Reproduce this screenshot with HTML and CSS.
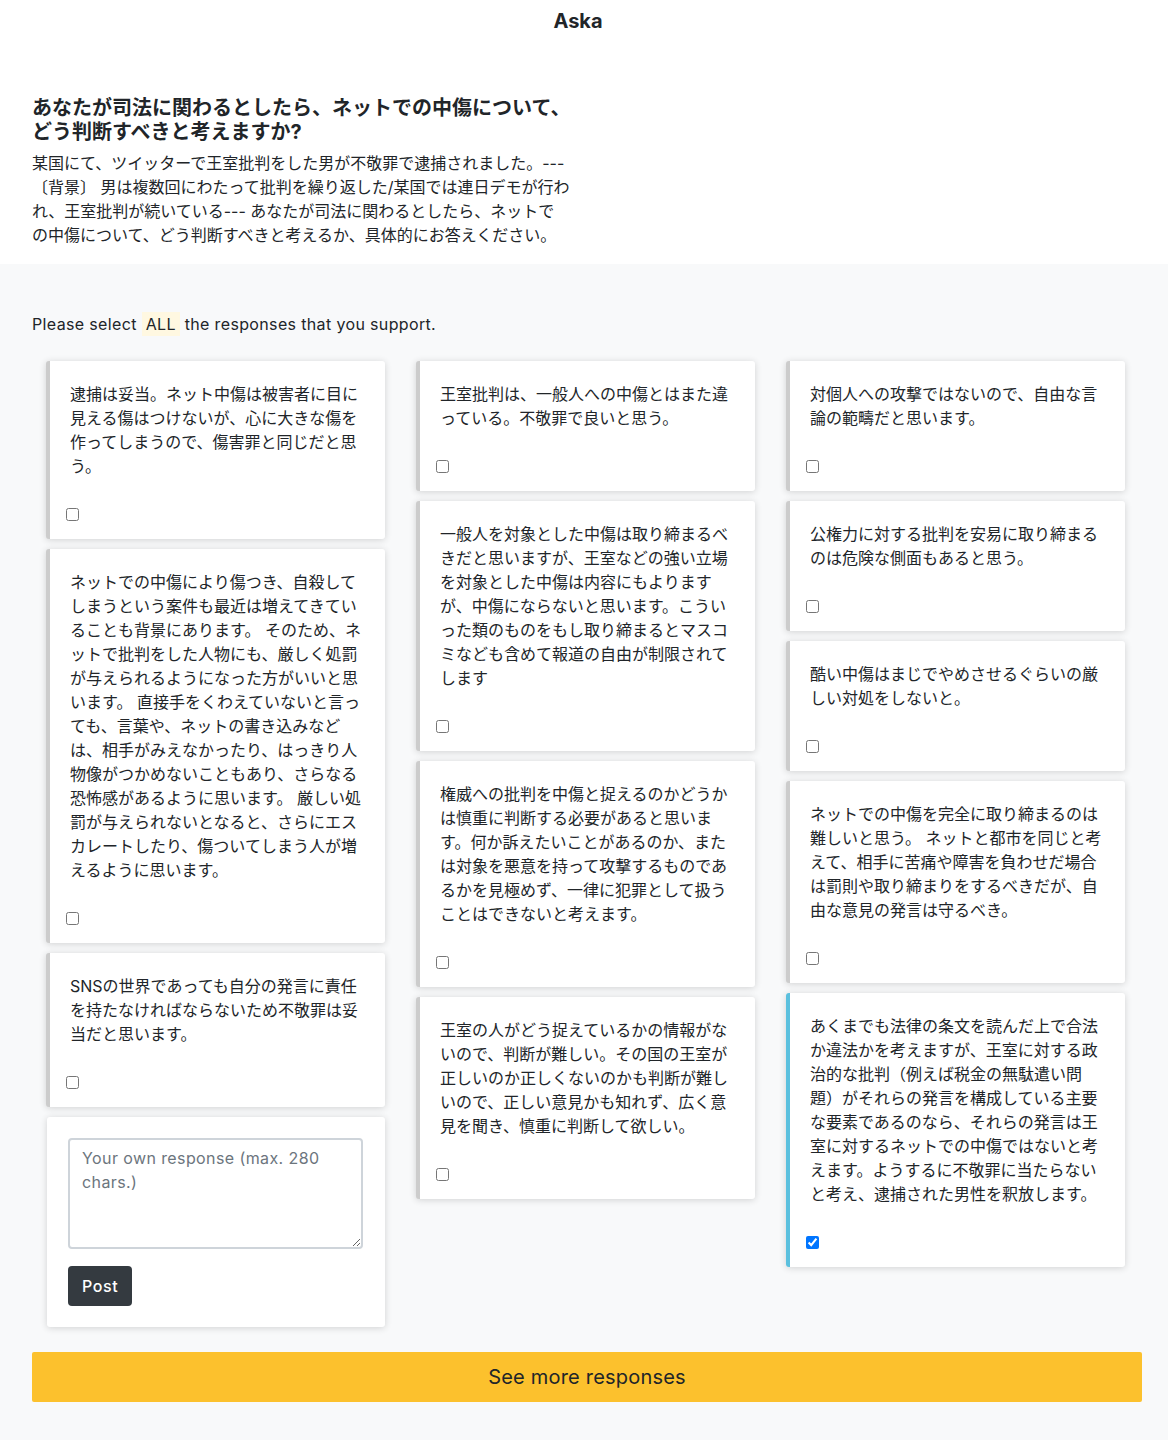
FILE: index.html
```html
<!DOCTYPE html>
<html lang="ja">
<head>
<meta charset="utf-8">
<title>Aska</title>
<link rel="stylesheet" href="styles.css">
</head>
<body>
<header class="topbar">Aska</header>
<section class="question">
  <h1 class="q-title">あなたが司法に関わるとしたら、ネットでの中傷について、どう判断すべきと考えますか?</h1>
  <p class="q-desc">某国にて、ツイッターで王室批判をした男が不敬罪で逮捕されました。--- 〔背景〕 男は複数回にわたって批判を繰り返した/某国では連日デモが行われ、王室批判が続いている--- あなたが司法に関わるとしたら、ネットでの中傷について、どう判断すべきと考えるか、具体的にお答えください。</p>
</section>
<main class="responses">
  <p class="instruction">Please select <span class="hl">ALL</span> the responses that you support.</p>
  <div class="board">
    <div class="col">
      <div class="card"><p class="card-text">逮捕は妥当。ネット中傷は被害者に目に見える傷はつけないが、心に大きな傷を作ってしまうので、傷害罪と同じだと思う。</p><input type="checkbox" class="check"></div>
      <div class="card"><p class="card-text">ネットでの中傷により傷つき、自殺してしまうという案件も最近は増えてきていることも背景にあります。 そのため、ネットで批判をした人物にも、厳しく処罰が与えられるようになった方がいいと思います。 直接手をくわえていないと言っても、言葉や、ネットの書き込みなどは、相手がみえなかったり、はっきり人物像がつかめないこともあり、さらなる恐怖感があるように思います。 厳しい処罰が与えられないとなると、さらにエスカレートしたり、傷ついてしまう人が増えるように思います。</p><input type="checkbox" class="check"></div>
      <div class="card"><p class="card-text">SNSの世界であっても自分の発言に責任を持たなければならないため不敬罪は妥当だと思います。</p><input type="checkbox" class="check"></div>
      <div class="card card-own">
        <textarea class="own-input" placeholder="Your own response (max. 280 chars.)"></textarea>
        <button class="post-btn" type="button">Post</button>
      </div>
    </div>
    <div class="col">
      <div class="card"><p class="card-text">王室批判は、一般人への中傷とはまた違っている。不敬罪で良いと思う。</p><input type="checkbox" class="check"></div>
      <div class="card"><p class="card-text">一般人を対象とした中傷は取り締まるべきだと思いますが、王室などの強い立場を対象とした中傷は内容にもよりますが、中傷にならないと思います。こういった類のものをもし取り締まるとマスコミなども含めて報道の自由が制限されてします</p><input type="checkbox" class="check"></div>
      <div class="card"><p class="card-text">権威への批判を中傷と捉えるのかどうかは慎重に判断する必要があると思います。何か訴えたいことがあるのか、または対象を悪意を持って攻撃するものであるかを見極めず、一律に犯罪として扱うことはできないと考えます。</p><input type="checkbox" class="check"></div>
      <div class="card"><p class="card-text">王室の人がどう捉えているかの情報がないので、判断が難しい。その国の王室が正しいのか正しくないのかも判断が難しいので、正しい意見かも知れず、広く意見を聞き、慎重に判断して欲しい。</p><input type="checkbox" class="check"></div>
    </div>
    <div class="col">
      <div class="card"><p class="card-text">対個人への攻撃ではないので、自由な言論の範疇だと思います。</p><input type="checkbox" class="check"></div>
      <div class="card"><p class="card-text">公権力に対する批判を安易に取り締まるのは危険な側面もあると思う。</p><input type="checkbox" class="check"></div>
      <div class="card"><p class="card-text">酷い中傷はまじでやめさせるぐらいの厳しい対処をしないと。</p><input type="checkbox" class="check"></div>
      <div class="card"><p class="card-text">ネットでの中傷を完全に取り締まるのは難しいと思う。 ネットと都市を同じと考えて、相手に苦痛や障害を負わせだ場合は罰則や取り締まりをするべきだが、自由な意見の発言は守るべき。</p><input type="checkbox" class="check"></div>
      <div class="card card-selected"><p class="card-text">あくまでも法律の条文を読んだ上で合法か違法かを考えますが、王室に対する政治的な批判（例えば税金の無駄遣い問題）がそれらの発言を構成している主要な要素であるのなら、それらの発言は王室に対するネットでの中傷ではないと考えます。ようするに不敬罪に当たらないと考え、逮捕された男性を釈放します。</p><input type="checkbox" class="check" checked></div>
    </div>
  </div>
  <button class="more-btn" type="button">See more responses</button>
</main>
</body>
</html>
```

FILE: styles.css
```css
html, body {
  margin: 0;
  padding: 0;
}
body {
  background: #f8f9fa;
  color: #212529;
  font-family: "Inter", "Noto Sans CJK JP", sans-serif;
  font-size: 16px;
  line-height: 24px;
}
.topbar {
  background: #fff;
  text-align: center;
  font-weight: 700;
  font-size: 20px;
  line-height: 24px;
  padding: 9px 12px 0 0;
  height: 24px;
}
.question {
  background: #fff;
  padding: 63px 26px 17px 32px;
}
.q-title {
  margin: 0;
  width: 545px;
  font-size: 20px;
  line-height: 24px;
  font-weight: 700;
}
.q-desc {
  margin: 7px 0 0;
  width: 538px;
}
.responses {
  padding: 48px 26px 38px 32px;
}
.instruction {
  margin: 0;
  letter-spacing: 0.022em;
}
.hl {
  background: #fff8e1;
  padding: 2px 4px;
}
.board {
  display: grid;
  grid-template-columns: repeat(3, 339px);
  column-gap: 31px;
  padding-left: 14px;
  margin-top: 25px;
  align-items: start;
}
.col {
  display: flex;
  flex-direction: column;
  gap: 10px;
}
.card {
  background: #fff;
  border-left: 4px solid #cccccc;
  border-radius: 3px;
  box-shadow: 0 1px 7px rgba(0, 0, 0, 0.16);
  padding: 21px 20px 15px 20px;
}
.card-selected {
  border-left-color: #5bc0de;
}
.card-text {
  margin: 0 0 30px;
}
.check {
  display: block;
  width: 13px;
  height: 13px;
  margin: 3px 0 3px -4px;
}
.card-own {
  border-left: 0;
  margin-left: 1px;
  padding: 21px;
}
.own-input {
  display: block;
  box-sizing: border-box;
  width: 295px;
  height: 111px;
  border: 2px solid #ced4da;
  border-radius: 4px;
  padding: 6px 12px;
  font-family: "Inter", "Noto Sans CJK JP", sans-serif;
  font-size: 16px;
  line-height: 24px;
  letter-spacing: 0.025em;
  color: #212529;
  margin: 0;
}
.own-input::placeholder {
  color: #6c757d;
}
.post-btn {
  display: block;
  margin-top: 17px;
  height: 40px;
  padding: 0 14px;
  background: #343a40;
  color: #fff;
  border: 0;
  border-radius: 4px;
  font-family: "Inter", sans-serif;
  font-size: 16px;
  font-weight: 500;
  letter-spacing: 0.04em;
}
.more-btn {
  display: block;
  width: 1110px;
  height: 50px;
  margin-top: 25px;
  background: #fcc12d;
  border: 0;
  border-radius: 2px;
  color: #212529;
  font-family: "Inter", sans-serif;
  font-size: 20px;
  letter-spacing: 0.01em;
}
```
